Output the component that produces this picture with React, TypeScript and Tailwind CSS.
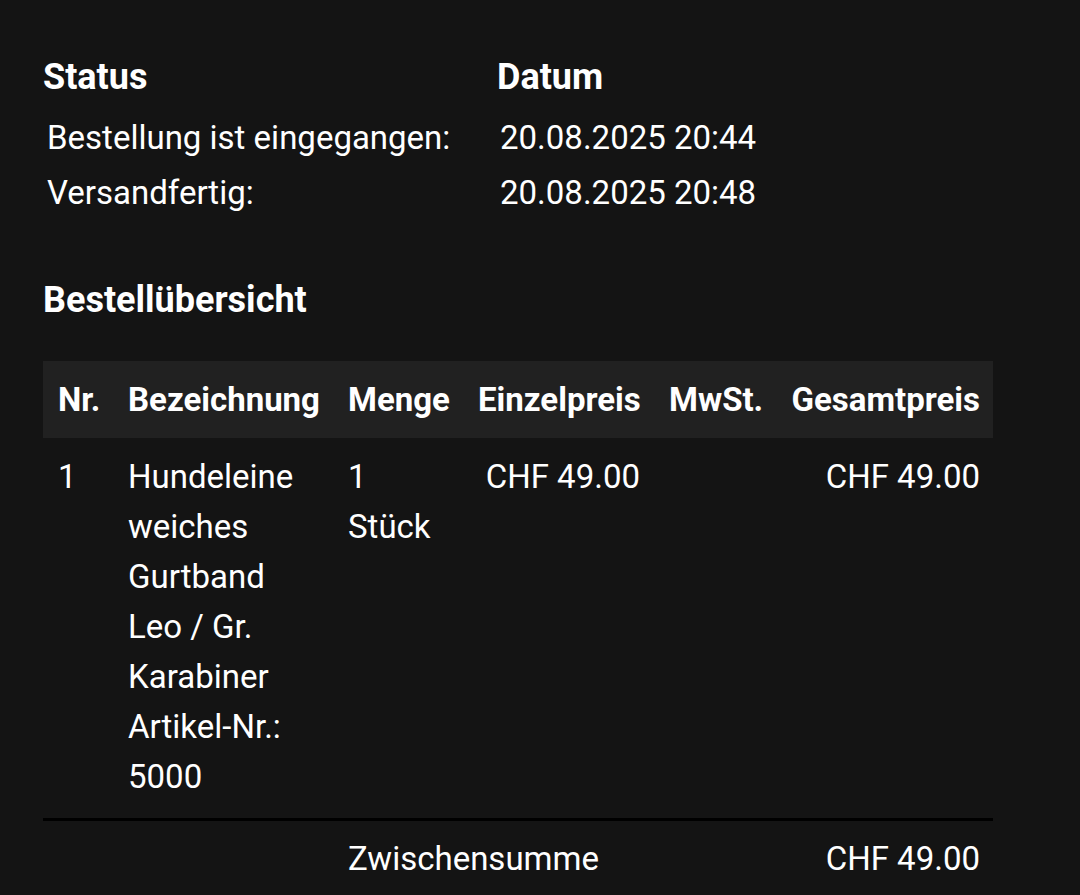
import React from "react";

const td = "px-[15px] pt-[14px] pb-[16px] border-b-[3px] border-[#000000]";

export default function App() {
  return (
    <div
      className="min-h-[895px] w-[1080px] bg-[#141414] text-white pl-[43px] pt-[57px]"
      style={{ fontFamily: "Roboto, 'Noto Sans', sans-serif" }}
    >
      {/* Status */}
      <div className="grid grid-cols-[454px_1fr]">
        <div className="h-[40px] flex items-center text-[36px] font-bold">Status</div>
        <div className="h-[40px] flex items-center text-[36px] font-bold">Datum</div>
      </div>
      <div className="mt-[13px] grid grid-cols-[454px_1fr] text-[33px]">
        <div className="h-[55px] flex items-center pl-[4px]">Bestellung ist eingegangen:</div>
        <div className="h-[55px] flex items-center pl-[3px]">20.08.2025 20:44</div>
        <div className="h-[55px] flex items-center pl-[4px]">Versandfertig:</div>
        <div className="h-[55px] flex items-center pl-[3px]">20.08.2025 20:48</div>
      </div>

      {/* Bestellübersicht */}
      <div className="mt-[60px] h-[40px] flex items-center text-[36px] font-bold">Bestellübersicht</div>

      <table className="mt-[41px] w-[950px] table-fixed border-collapse text-[33px]">
        <colgroup>
          <col className="w-[70px]" />
          <col className="w-[220px]" />
          <col className="w-[130px]" />
          <col className="w-[192px]" />
          <col className="w-[122px]" />
          <col className="w-[216px]" />
        </colgroup>
        <thead>
          <tr className="bg-[#212121] h-[77px]">
            <th className="px-[15px] text-left font-bold">Nr.</th>
            <th className="px-[15px] text-left font-bold whitespace-nowrap">Bezeichnung</th>
            <th className="px-[15px] text-left font-bold">Menge</th>
            <th className="px-[15px] text-right font-bold">Einzelpreis</th>
            <th className="pl-[14px] pr-[10px] text-left font-bold">MwSt.</th>
            <th className="px-[13px] text-right font-bold">Gesamtpreis</th>
          </tr>
        </thead>
        <tbody className="leading-[50px]">
          <tr className="align-top">
            <td className={td}>1</td>
            <td className={td}>
              Hundeleine
              <br />
              weiches
              <br />
              Gurtband
              <br />
              Leo / Gr.
              <br />
              Karabiner
              <br />
              Artikel-Nr.:
              <br />
              5000
            </td>
            <td className={td}>
              1<br />
              Stück
            </td>
            <td className={`${td} text-right whitespace-nowrap`}>CHF 49.00</td>
            <td className={td}></td>
            <td className={`${td} !px-[13px] text-right whitespace-nowrap`}>CHF 49.00</td>
          </tr>
          <tr className="align-top">
            <td className="px-[15px] pt-[13px]"></td>
            <td className="px-[15px] pt-[13px]"></td>
            <td colSpan={3} className="px-[15px] pt-[13px] whitespace-nowrap">Zwischensumme</td>
            <td className="px-[13px] pt-[13px] text-right whitespace-nowrap">CHF 49.00</td>
          </tr>
        </tbody>
      </table>
    </div>
  );
}
